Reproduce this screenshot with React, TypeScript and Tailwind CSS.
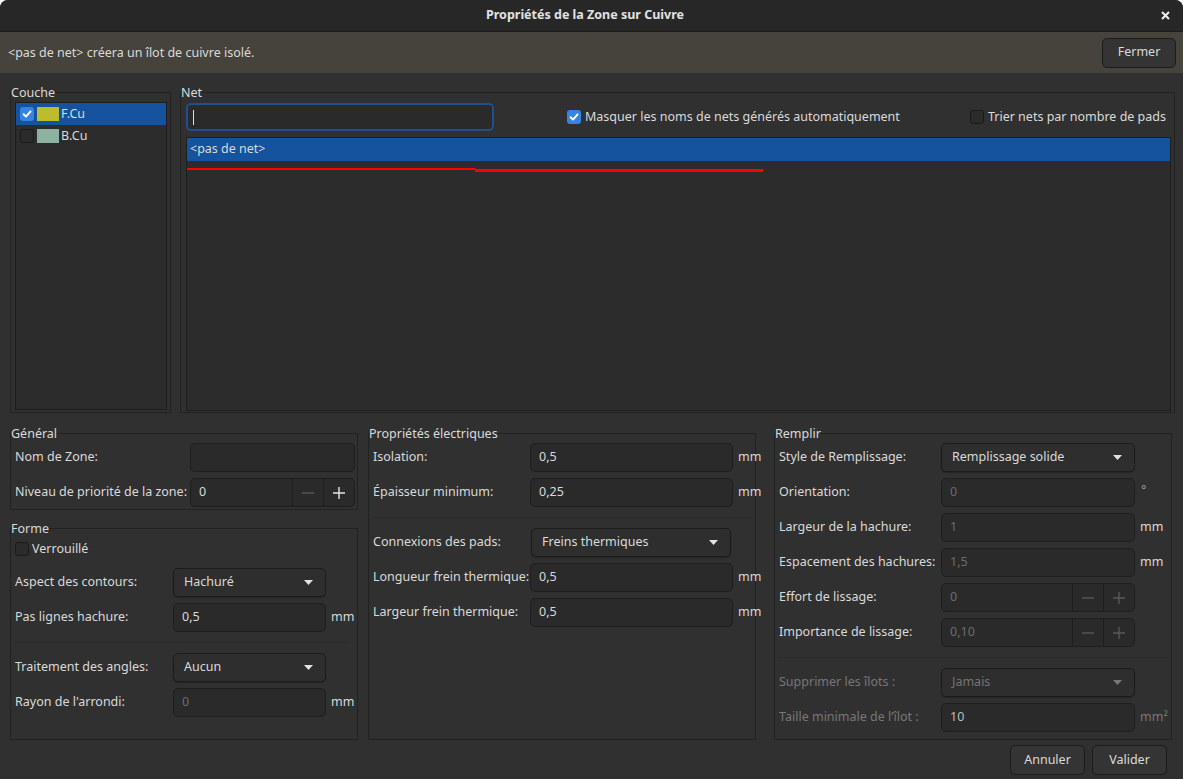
import React from 'react';

type Kids = { children?: React.ReactNode };

function Check({ checked = false }: { checked?: boolean }) {
  if (checked) {
    return (
      <span className="flex h-[14px] w-[14px] shrink-0 items-center justify-center rounded-[3px] bg-[#3584e4]">
        <svg width="10" height="10" viewBox="0 0 10 10">
          <path d="M1.6 5.3 4 7.6 8.5 2.5" fill="none" stroke="#ffffff" strokeWidth="1.9" strokeLinecap="round" strokeLinejoin="round" />
        </svg>
      </span>
    );
  }
  return <span className="h-[14px] w-[14px] shrink-0 rounded-[3px] border border-[#1a1a1a] bg-[#2b2b2b]" />;
}

function Frame({ title, className = '', children }: Kids & { title: string; className?: string }) {
  return (
    <fieldset className={`min-w-0 shrink-0 border border-[#222222] ${className}`}>
      <legend className="leading-[15px]">{title}</legend>
      {children}
    </fieldset>
  );
}

function Input({ value = '', disabled = false, soft = false, w }: { value?: string; disabled?: boolean; soft?: boolean; w: string }) {
  return (
    <div
      className={`flex h-[29px] shrink-0 items-center rounded-[5px] border border-[#1e1e1e] bg-[#2a2a2a] pl-[8px] ${w} ${
        disabled ? 'text-[#6c6c6c]' : soft ? 'text-[#bdbdbd]' : ''
      }`}
    >
      {value}
    </div>
  );
}

function Dropdown({ value, disabled = false, w }: { value: string; disabled?: boolean; w: string }) {
  return (
    <div
      className={`flex h-[29px] shrink-0 items-center justify-between rounded-[5px] border border-[#1c1c1c] bg-[#2e2e2e] pl-[10px] pr-[12px] shadow-[0_1px_1px_rgba(0,0,0,0.25)] ${w} ${
        disabled ? 'text-[#757575]' : ''
      }`}
    >
      <span>{value}</span>
      <svg width="9" height="5" viewBox="0 0 9 5">
        <path d="M0 0h9L4.5 5z" fill={disabled ? '#777777' : '#e2e2e2'} />
      </svg>
    </div>
  );
}

function Minus({ dim }: { dim: boolean }) {
  return (
    <svg width="14" height="14" viewBox="0 0 14 14">
      <path d="M1 7h12" stroke={dim ? '#585858' : '#e4e4e4'} strokeWidth="1.4" />
    </svg>
  );
}

function Plus({ dim }: { dim: boolean }) {
  return (
    <svg width="14" height="14" viewBox="0 0 14 14">
      <path d="M1 7h12M7 1v12" stroke={dim ? '#585858' : '#e4e4e4'} strokeWidth="1.4" />
    </svg>
  );
}

function Spin({ value, disabled = false, w }: { value: string; disabled?: boolean; w: string }) {
  return (
    <div className={`flex h-[29px] shrink-0 rounded-[5px] border border-[#1e1e1e] bg-[#2a2a2a] ${w}`}>
      <span className={`flex flex-1 items-center pl-[8px] ${disabled ? 'text-[#6c6c6c]' : ''}`}>{value}</span>
      <span className="flex w-[31px] items-center justify-center border-l border-[#1e1e1e]">
        <Minus dim />
      </span>
      <span className="flex w-[31px] items-center justify-center border-l border-[#1e1e1e]">
        <Plus dim={disabled} />
      </span>
    </div>
  );
}

function Row({ label, lw, unit, dim = false, children }: Kids & { label: string; lw: string; unit?: string; dim?: boolean }) {
  return (
    <div className="flex h-[29px] items-center">
      <span className={`shrink-0 whitespace-nowrap ${lw} ${dim ? 'text-[#777777]' : ''}`}>{label}</span>
      {children}
      {unit && <span className={`ml-[5px] whitespace-nowrap ${dim ? 'text-[#777777]' : ''}`}>{unit}</span>}
    </div>
  );
}

function Sep({ className = '' }: { className?: string }) {
  return <div className={`my-[10px] h-px bg-[#2a2a2a] ${className}`} />;
}

function Btn({ label, w }: { label: string; w: string }) {
  return (
    <button className={`flex h-[30px] items-center justify-center rounded-[5px] border border-[#1b1b1b] bg-[#343434] ${w}`}>
      {label}
    </button>
  );
}

export default function App() {
  return (
    <div className="h-[779px] w-[1187px] bg-white">
      <div className="flex h-full w-[1183px] flex-col overflow-hidden rounded-t-[8px] bg-[#303030] font-['Noto_Sans',sans-serif] text-[12.5px] text-[#dadada]">
        {/* barre de titre */}
        <div className="flex h-[32px] shrink-0 items-center border-b border-[#1c1c1c] bg-[#272727]">
          <div className="flex-1" />
          <span className="text-[12.5px] font-bold text-[#e2e2e2]">Propriétés de la Zone sur Cuivre</span>
          <div className="flex flex-1 justify-end pr-[13px]">
            <svg width="9" height="9" viewBox="0 0 9 9">
              <path d="M1 1l7 7M8 1l-7 7" stroke="#eeeeee" strokeWidth="2" />
            </svg>
          </div>
        </div>

        {/* barre d'info */}
        <div className="flex h-[41px] shrink-0 items-center justify-between bg-[#46423c] pl-[8px] pr-[7px]">
          <span className="pt-px">&lt;pas de net&gt; créera un îlot de cuivre isolé.</span>
          <Btn label="Fermer" w="w-[74px]" />
        </div>

        <div className="flex flex-1 flex-col pl-[10px]">
          {/* couche + net */}
          <div className="mt-[12px] flex h-[328px] gap-[9px]">
            <Frame title="Couche" className="h-[328px] w-[161px]">
              <div className="ml-[4px] mt-[2px] h-[308px] w-[152px] border border-[#1e1e1e] bg-[#2c2c2c]">
                <div className="flex h-[22px] items-center bg-[#15539e] pl-[4px]">
                  <Check checked />
                  <span className="ml-[3px] h-[14px] w-[22px] bg-[#bcbc2c]" />
                  <span className="ml-[2px]">F.Cu</span>
                </div>
                <div className="flex h-[22px] items-center pl-[4px]">
                  <Check />
                  <span className="ml-[3px] h-[14px] w-[22px] bg-[#8db2a2]" />
                  <span className="ml-[2px]">B.Cu</span>
                </div>
              </div>
            </Frame>

            <Frame title="Net" className="h-[328px] w-[995px]">
              <div className="pl-[5px] pr-[8px] pt-[3px]">
                <div className="flex h-[28px] items-center">
                  <div className="flex h-[28px] w-[308px] items-center rounded-[5px] border-2 border-[#1f4f8c] bg-[#2a2a2a] pl-[5px]">
                    <span className="h-[15px] w-px bg-[#dddddd]" />
                  </div>
                  <div className="ml-[73px] flex items-center gap-[4px]">
                    <Check checked />
                    <span>Masquer les noms de nets générés automatiquement</span>
                  </div>
                  <div className="ml-auto flex items-center gap-[4px]">
                    <Check />
                    <span>Trier nets par nombre de pads</span>
                  </div>
                </div>
                <div className="mt-[6px] h-[274px] w-[985px] border border-[#1e1e1e] bg-[#2c2c2c]">
                  <div className="flex h-[23px] items-center bg-[#15539e] pl-[3px]">&lt;pas de net&gt;</div>
                  <div className="mt-[7px] flex items-start">
                    <span className="h-[2px] w-[288px] bg-[#ff0000]" />
                    <span className="mt-px h-[3px] w-[288px] bg-[#ff0000]" />
                  </div>
                </div>
              </div>
            </Frame>
          </div>

          {/* propriétés */}
          <div className="mt-[13px] flex h-[314px] items-start">
            <div className="flex w-[348px] shrink-0 flex-col gap-[11px]">
              <Frame title="Général" className="h-[84px] w-[348px]">
                <div className="flex flex-col gap-[6px] pl-[4px] pt-[2px]">
                  <Row label="Nom de Zone:" lw="w-[175px]">
                    <Input w="w-[165px]" />
                  </Row>
                  <Row label="Niveau de priorité de la zone:" lw="w-[175px]">
                    <Spin value="0" w="w-[165px]" />
                  </Row>
                </div>
              </Frame>

              <Frame title="Forme" className="h-[219px] w-[348px]">
                <div className="flex flex-col pl-[4px] pr-[7px]">
                  <div className="mt-[5px] flex h-[16px] items-center gap-[3px]">
                    <Check />
                    <span>Verrouillé</span>
                  </div>
                  <div className="mt-[11px] flex flex-col gap-[6px]">
                    <Row label="Aspect des contours:" lw="w-[158px]">
                      <Dropdown value="Hachuré" w="w-[153px]" />
                    </Row>
                    <Row label="Pas lignes hachure:" lw="w-[158px]" unit="mm">
                      <Input value="0,5" w="w-[153px]" />
                    </Row>
                  </div>
                  <Sep />
                  <div className="flex flex-col gap-[6px]">
                    <Row label="Traitement des angles:" lw="w-[158px]">
                      <Dropdown value="Aucun" w="w-[153px]" />
                    </Row>
                    <Row label="Rayon de l'arrondi:" lw="w-[158px]" unit="mm">
                      <Input value="0" disabled w="w-[153px]" />
                    </Row>
                  </div>
                </div>
              </Frame>
            </div>

            <Frame title="Propriétés électriques" className="ml-[10px] h-[314px] w-[388px]">
              <div className="flex flex-col pl-[4px] pr-[3px] pt-[2px]">
                <div className="flex flex-col gap-[6px]">
                  <Row label="Isolation:" lw="w-[157px]" unit="mm">
                    <Input value="0,5" w="w-[203px]" />
                  </Row>
                  <Row label="Épaisseur minimum:" lw="w-[157px]" unit="mm">
                    <Input value="0,25" w="w-[203px]" />
                  </Row>
                </div>
                <Sep />
                <div className="flex flex-col gap-[6px]">
                  <Row label="Connexions des pads:" lw="w-[158px]">
                    <Dropdown value="Freins thermiques" w="w-[200px]" />
                  </Row>
                  <Row label="Longueur frein thermique:" lw="w-[157px]" unit="mm">
                    <Input value="0,5" w="w-[203px]" />
                  </Row>
                  <Row label="Largeur frein thermique:" lw="w-[157px]" unit="mm">
                    <Input value="0,5" w="w-[203px]" />
                  </Row>
                </div>
              </div>
            </Frame>

            <Frame title="Remplir" className="ml-[18px] h-[314px] w-[398px]">
              <div className="flex flex-col pl-[4px] pr-[3px] pt-[2px]">
                <div className="flex flex-col gap-[6px]">
                  <Row label="Style de Remplissage:" lw="w-[162px]">
                    <Dropdown value="Remplissage solide" w="w-[194px]" />
                  </Row>
                  <Row label="Orientation:" lw="w-[162px]">
                    <Input value="0" disabled w="w-[194px]" />
                    <span className="ml-[6px] self-start pt-[3px] text-[#9a9a9a]">°</span>
                  </Row>
                  <Row label="Largeur de la hachure:" lw="w-[162px]" unit="mm">
                    <Input value="1" disabled w="w-[194px]" />
                  </Row>
                  <Row label="Espacement des hachures:" lw="w-[162px]" unit="mm">
                    <Input value="1,5" disabled w="w-[194px]" />
                  </Row>
                  <Row label="Effort de lissage:" lw="w-[162px]">
                    <Spin value="0" disabled w="w-[194px]" />
                  </Row>
                  <Row label="Importance de lissage:" lw="w-[162px]">
                    <Spin value="0,10" disabled w="w-[194px]" />
                  </Row>
                </div>
                <Sep />
                <div className="flex flex-col gap-[6px]">
                  <Row label="Supprimer les îlots :" lw="w-[162px]" dim>
                    <Dropdown value="Jamais" disabled w="w-[194px]" />
                  </Row>
                  <Row label="Taille minimale de l’îlot :" lw="w-[162px]" unit="mm²" dim>
                    <Input value="10" soft w="w-[194px]" />
                  </Row>
                </div>
              </div>
            </Frame>
          </div>

          {/* boutons */}
          <div className="mt-[5px] flex justify-end gap-[7px] pr-[16px]">
            <Btn label="Annuler" w="w-[75px]" />
            <Btn label="Valider" w="w-[75px]" />
          </div>
        </div>
      </div>
    </div>
  );
}
